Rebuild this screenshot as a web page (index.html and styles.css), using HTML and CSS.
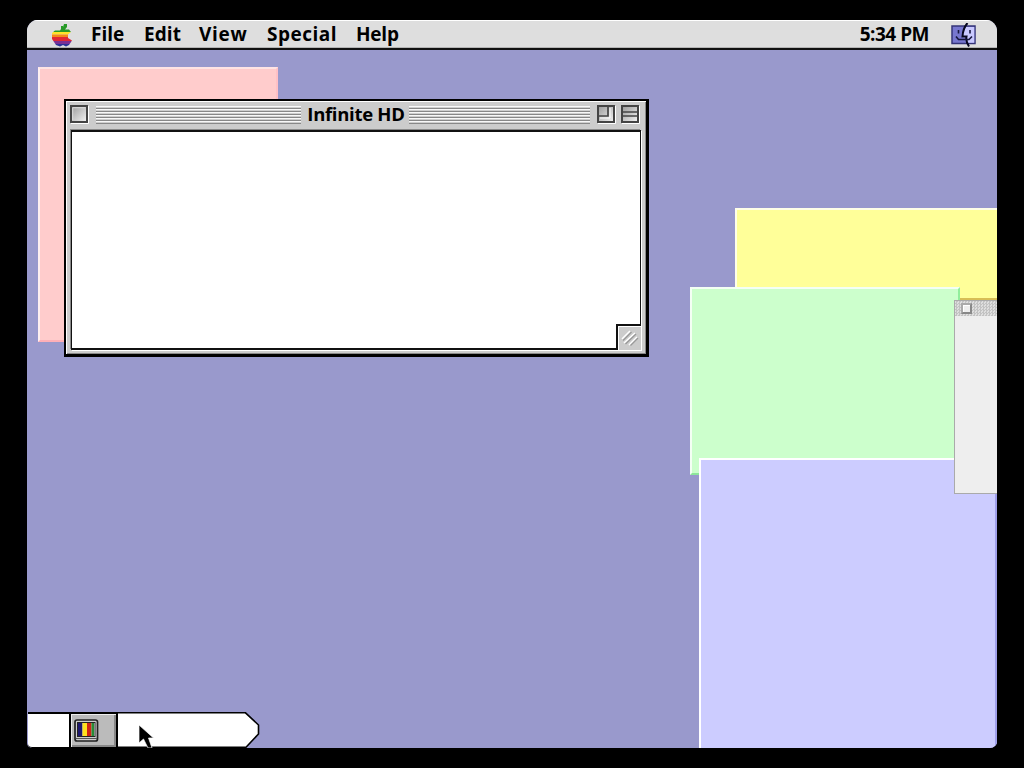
FILE: index.html
```html
<!DOCTYPE html>
<html lang="en">
<head>
  <meta charset="UTF-8">
  <title>Infinite HD</title>
  <link rel="stylesheet" href="styles.css">
</head>
<body>
  <div class="screen">
    <!-- Menu bar -->
    <div class="menubar">
      <svg class="apple" width="22" height="24" viewBox="0 0 22 24">
        <defs>
          <clipPath id="apple-shape">
            <path d="M10 6V3H12V4L13 1H16V4L14 6.500H18L20 9L17 11.500V15L21 17.500L18 22L15 23.500L12 22L9 23.500L5 22L3 19L1 16V10L4 7.500H9Z"/>
          </clipPath>
        </defs>
        <g clip-path="url(#apple-shape)">
          <rect width="22" height="9" fill="#279a27"/>
          <rect y="9" width="22" height="2.500" fill="#ffe329"/>
          <rect y="11.500" width="22" height="2.500" fill="#f48a17"/>
          <rect y="14" width="22" height="4" fill="#e02835"/>
          <rect y="18" width="22" height="3" fill="#793194"/>
          <rect y="21" width="22" height="3" fill="#2c3197"/>
        </g>
      </svg>
      <span class="menu file">File</span>
      <span class="menu edit">Edit</span>
      <span class="menu view">View</span>
      <span class="menu special">Special</span>
      <span class="menu help">Help</span>
      <span class="clock">5:34 PM</span>
      <svg class="finder" width="26" height="24" viewBox="0 0 26 24">
        <path d="M1 3H24V20.500H1Z" fill="#7777cf" stroke="#343478" stroke-width="1.500"/>
        <path d="M15 4H23.300V19.700H16L15 14.500H11.500Q12 8 15 4Z" fill="#c9c9ff"/>
        <path d="M16.500 0Q12 5 11.500 13.500H15.500Q14.500 18 18 23.500" fill="none" stroke="#080820" stroke-width="2"/>
        <path d="M7.500 7V10.500M19 7V10.500M5 13.500L7.500 16.500H18L21 13.500" fill="none" stroke="#17173f" stroke-width="1.600"/>
      </svg>
    </div>

    <!-- Sticky notes -->
    <div class="note pink"></div>
    <div class="note yellow"></div>
    <div class="note green"></div>
    <div class="note blue"></div>
    <div class="palette">
      <div class="palette-bar"><i class="palette-close"></i></div>
    </div>

    <!-- Finder window -->
    <div class="window">
      <div class="titlebar">
        <svg class="box" width="19" height="19" viewBox="0 0 19 19">
          <defs>
            <linearGradient id="box-fill" x1="0" y1="0" x2="1" y2="1">
              <stop offset="0" stop-color="#999"/>
              <stop offset="1" stop-color="#f5f5f5"/>
            </linearGradient>
          </defs>
          <path d="M1 18.500H18.500V1" fill="none" stroke="#fff"/>
          <rect x="1" y="1" width="16" height="16" fill="url(#box-fill)" stroke="#444" stroke-width="2"/>
          <path d="M2.700 15.300V2.700H15.300" fill="none" stroke="#ddd"/>
        </svg>
        <div class="stripes left"></div>
        <span class="title">Infinite HD</span>
        <div class="stripes right"></div>
        <svg class="box zoom" width="19" height="19" viewBox="0 0 19 19">
          <path d="M1 18.500H18.500V1" fill="none" stroke="#fff"/>
          <rect x="1" y="1" width="16" height="16" fill="url(#box-fill)" stroke="#444" stroke-width="2"/>
          <path d="M11 2V11H2" fill="none" stroke="#444" stroke-width="1.700"/>
          <path d="M13 3V13H3" fill="none" stroke="#fff"/>
        </svg>
        <svg class="box" width="19" height="19" viewBox="0 0 19 19">
          <path d="M1 18.500H18.500V1" fill="none" stroke="#fff"/>
          <rect x="1" y="1" width="16" height="16" fill="url(#box-fill)" stroke="#444" stroke-width="2"/>
          <path d="M2 7H16M2 11H16" stroke="#444" stroke-width="1.600"/>
        </svg>
      </div>
      <div class="content">
        <div class="grow">
          <svg width="23" height="24" viewBox="0 0 23 24">
            <path d="M4 13L12 5M6 17L17 7M11 19L19 11" stroke="#fff" stroke-width="1.600"/>
            <path d="M5 14.500L13.500 6M7.500 18L18 8M12.500 19.500L20 12" stroke="#999" stroke-width="1.300"/>
          </svg>
        </div>
      </div>
    </div>

    <!-- Control strip -->
    <div class="strip">
      <div class="strip-start"></div>
      <div class="strip-module">
        <svg width="25" height="24" viewBox="0 0 25 24">
          <rect x="1" y="1" width="22.500" height="21" rx="2" fill="#ccc" stroke="#222" stroke-width="1.700"/>
          <path d="M2 19.500H23" stroke="#555"/>
          <rect x="3.500" y="3.500" width="17.500" height="14" fill="#eee" stroke="#222" stroke-width="1"/>
          <rect x="4" y="4" width="4.500" height="13" fill="#1d176e"/>
          <rect x="8.500" y="4" width="4.500" height="13" fill="#ffe11e"/>
          <rect x="13" y="4" width="4.500" height="13" fill="#cf2414"/>
          <rect x="17.500" y="4" width="2.500" height="13" fill="#268c35"/>
        </svg>
      </div>
      <svg class="strip-end" width="142" height="36" viewBox="0 0 142 36">
        <path d="M0 .8H127.500L140.500 13V22L128 35.200H0" fill="#fff" stroke="#000" stroke-width="1.600"/>
      </svg>
    </div>

    <svg class="pointer" width="17" height="24" viewBox="0 0 17 24">
      <path d="M1 1V19L5.500 15L10 24H14L10.500 14H15.500Z" fill="#000" stroke="#fff" stroke-width=".7"/>
    </svg>
  </div>
</body>
</html>
```
FILE: styles.css
```css
* { box-sizing: border-box; }
body { margin: 0; padding: 20px 27px; height: 768px; background: #000; overflow: hidden; font-family: "Open Sans", "Noto Sans", sans-serif; font-weight: 700; color: #000; }
svg { display: block; flex: none; }
.screen { position: relative; width: 970px; height: 728px; background: #9999cc; border-radius: 11px 11px 7px 5px; overflow: hidden; }

.menubar { display: flex; align-items: center; height: 30px; padding: 0 20px 0 24px; background: #dedede; border-top: 1px solid #fff; border-bottom: 2px solid #111; font-size: 19px; line-height: 27px; white-space: nowrap; box-shadow: inset 0 -1px #b4b4b4; }
.apple { margin-right: 18px; }
.menu { flex: none; }
.file { width: 53px; }
.edit { width: 55px; letter-spacing: 0.1px; }
.view { width: 68px; letter-spacing: 0.7px; }
.special { width: 89px; letter-spacing: 0.5px; }
.help { letter-spacing: -0.2px; }
.clock { margin-left: auto; margin-right: 22px; letter-spacing: -0.5px; }

.note { position: absolute; border: 2px solid; }
.pink { left: 11px; top: 47px; width: 240px; height: 275px; background: #ffcccc; border-color: #ffe4e4 #ffc0c5 #ffb0b8 #fff0f0; }
.yellow { left: 708px; top: 188px; width: 270px; height: 92px; background: #ffff99; border-color: #ffffe8 #e6d34d #d8be55 #ffffe8; }
.green { left: 663px; top: 267px; width: 270px; height: 188px; background: #ccffcc; border-color: #f4fff4 #91ee9c #8de79a #f4fff4; }
.blue { left: 672px; top: 438px; width: 298px; height: 292px; background: #ccccff; border-color: #fff #9f9fea #9f9fea #fff; }
.palette { position: absolute; left: 927px; top: 280px; width: 50px; height: 194px; background: #eee; border: 1px solid #aaa; }
.palette-bar { height: 15px; padding: 2px 0 0 6px; background: repeating-conic-gradient(#c2c2c2 0 25%, #dedede 0 50%) 0 0 / 3px 3px; }
.palette-close { display: block; width: 11px; height: 11px; background: #eee; border: 2px solid #888; border-top-color: #aaa; border-left-color: #aaa; box-shadow: inset 1px 1px #fff; }

.window { position: absolute; left: 37px; top: 79px; width: 585px; height: 258px; padding: 0 6px 6px 4px; background: #ccc; border: 2px solid #000; border-width: 2px 3px 3px 2px; box-shadow: inset 1px 1px #fff, inset -1px -1px #888; }
.titlebar { display: flex; align-items: center; height: 29px; padding-bottom: 2px; }
.stripes { height: 18px; background: repeating-linear-gradient(#f8f8f8 0 1px, #cfcfcf 1px 2px, #888 2px 3px); }
.left { width: 206px; margin-left: 7px; }
.right { width: 182px; }
.title { width: 109px; padding: 0 0 2px 2px; text-align: center; font-size: 18.5px; line-height: 25px; letter-spacing: -0.3px; white-space: nowrap; }
.zoom { margin: 0 5px 0 7px; }
.content { position: relative; width: 570px; height: 220px; margin-left: 1px; background: #fff; border: 2px solid #111; border-width: 2px 1px 2px 1px; box-shadow: -1px -1px #888, 1px 1px #fff; }
.grow { position: absolute; right: -1px; bottom: -2px; width: 25px; height: 26px; background: #ccc; border: 2px solid #111; border-width: 2px 0 0 2px; box-shadow: inset 1px 1px #fff; }

.strip { position: absolute; left: 1px; top: 692px; display: flex; height: 36px; }
.strip-start { width: 41px; background: #fff; border-top: 2px solid #000; border-bottom: 1px solid #000; border-radius: 0 0 0 4px; }
.strip-module { width: 49px; padding: 5px 0 0 3px; background: #bbb; border: 2px solid #000; border-bottom-width: 1px; box-shadow: inset 1px 1px #eee, inset -2px -2px #888; }
.pointer { position: absolute; left: 111px; top: 704px; }
```
